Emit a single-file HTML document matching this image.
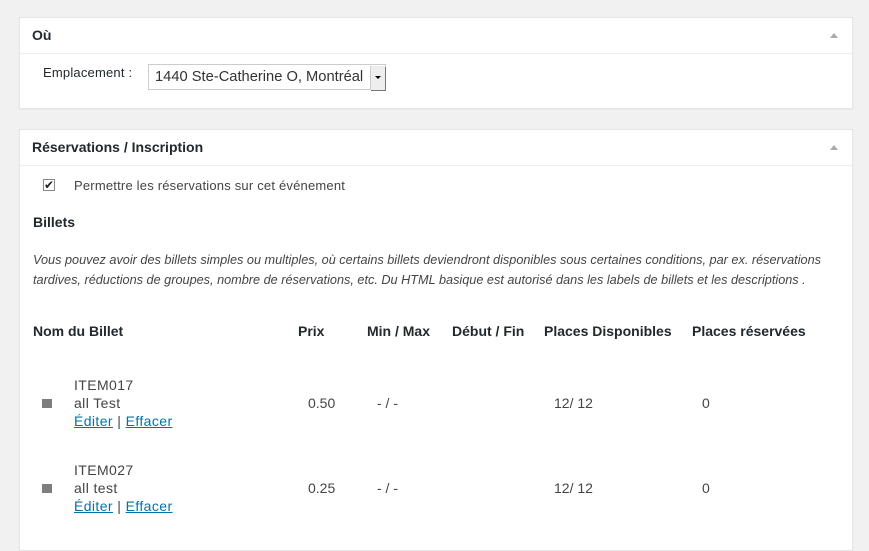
<!DOCTYPE html><html><head><style>
body{margin:0;width:869px;height:532px;background:#f1f1f1;font-family:"Liberation Sans",sans-serif;color:#444;position:relative;overflow:hidden;font-size:13px}
.box{position:absolute;left:19px;width:832px;background:#fff;border:1px solid #e5e5e5;box-shadow:0 1px 1px rgba(0,0,0,.04)}
.hd{height:35px;border-bottom:1px solid #eee;font-weight:bold;font-size:14px;color:#23282d;line-height:35px;padding-left:12px;position:relative}
.hd:after{content:"";position:absolute;right:14px;top:15px;border-left:4px solid transparent;border-right:4px solid transparent;border-bottom:5px solid #aaa}
.a{position:absolute;white-space:nowrap}
a{color:#0073aa;text-decoration:underline}
.b{font-weight:bold;color:#23282d}
.sq{position:absolute;width:10px;height:9px;background:#7e7e7e}
.it{letter-spacing:.4px}
</style></head><body>
<div class="box" style="top:17px;height:90px"><div class="hd">Où</div></div>
<div class="a" style="left:43px;top:65px;color:#23282d;letter-spacing:.2px">Emplacement :</div>
<div class="a" style="left:148px;top:64px;width:238px;height:26px;border:1px solid #ccc;box-sizing:border-box;background:#fff;font-size:14.7px;line-height:24px;padding-left:6px;color:#333">1440 Ste-Catherine O, Montréal
<div style="position:absolute;right:0;top:1px;width:14px;height:24px;background:#eee;border-left:1px solid #ccc;box-shadow:1px 1px 0 #777"><div style="position:absolute;left:4px;top:10px;border-left:3px solid transparent;border-right:3px solid transparent;border-top:3px solid #000"></div></div></div>
<div class="box" style="top:129px;height:420px"><div class="hd">Réservations / Inscription</div></div>
<div class="a" style="left:43px;top:179px;width:12px;height:12px;border:1px solid #888;box-sizing:border-box;font-size:12px;line-height:10px;text-align:center;color:#222">✔</div>
<div class="a" style="left:74px;top:178px;letter-spacing:.2px">Permettre les réservations sur cet événement</div>
<div class="a b" style="left:33px;top:214px;font-size:14px">Billets</div>
<div class="a" style="left:33px;top:250px;font-style:italic;font-size:12.7px;line-height:20px;white-space:normal;width:800px">Vous pouvez avoir des billets simples ou multiples, où certains billets deviendront disponibles sous certaines conditions, par ex. réservations tardives, réductions de groupes, nombre de réservations, etc. Du HTML basique est autorisé dans les labels de billets et les descriptions .</div>
<div class="a b" style="left:33px;top:323px;font-size:14px">Nom du Billet</div>
<div class="a b" style="left:298px;top:323px;font-size:14px">Prix</div>
<div class="a b" style="left:367px;top:323px;font-size:14px">Min / Max</div>
<div class="a b" style="left:452px;top:323px;font-size:14px">Début / Fin</div>
<div class="a b" style="left:544px;top:323px;font-size:14px">Places Disponibles</div>
<div class="a b" style="left:692px;top:323px;font-size:14px">Places réservées</div>

<div class="sq" style="left:42px;top:399px"></div>
<div class="a it" style="left:74px;top:376px;line-height:18px;font-size:14px">ITEM017<br>all Test<br><a>Éditer</a> | <a>Effacer</a></div>
<div class="a" style="left:308px;top:395px;font-size:14px">0.50</div>
<div class="a" style="left:377px;top:395px;font-size:14px">- / -</div>
<div class="a" style="left:554px;top:395px;font-size:14px">12/ 12</div>
<div class="a" style="left:702px;top:395px;font-size:14px">0</div>

<div class="sq" style="left:42px;top:484px"></div>
<div class="a it" style="left:74px;top:461px;line-height:18px;font-size:14px">ITEM027<br>all test<br><a>Éditer</a> | <a>Effacer</a></div>
<div class="a" style="left:308px;top:480px;font-size:14px">0.25</div>
<div class="a" style="left:377px;top:480px;font-size:14px">- / -</div>
<div class="a" style="left:554px;top:480px;font-size:14px">12/ 12</div>
<div class="a" style="left:702px;top:480px;font-size:14px">0</div>
</body></html>
